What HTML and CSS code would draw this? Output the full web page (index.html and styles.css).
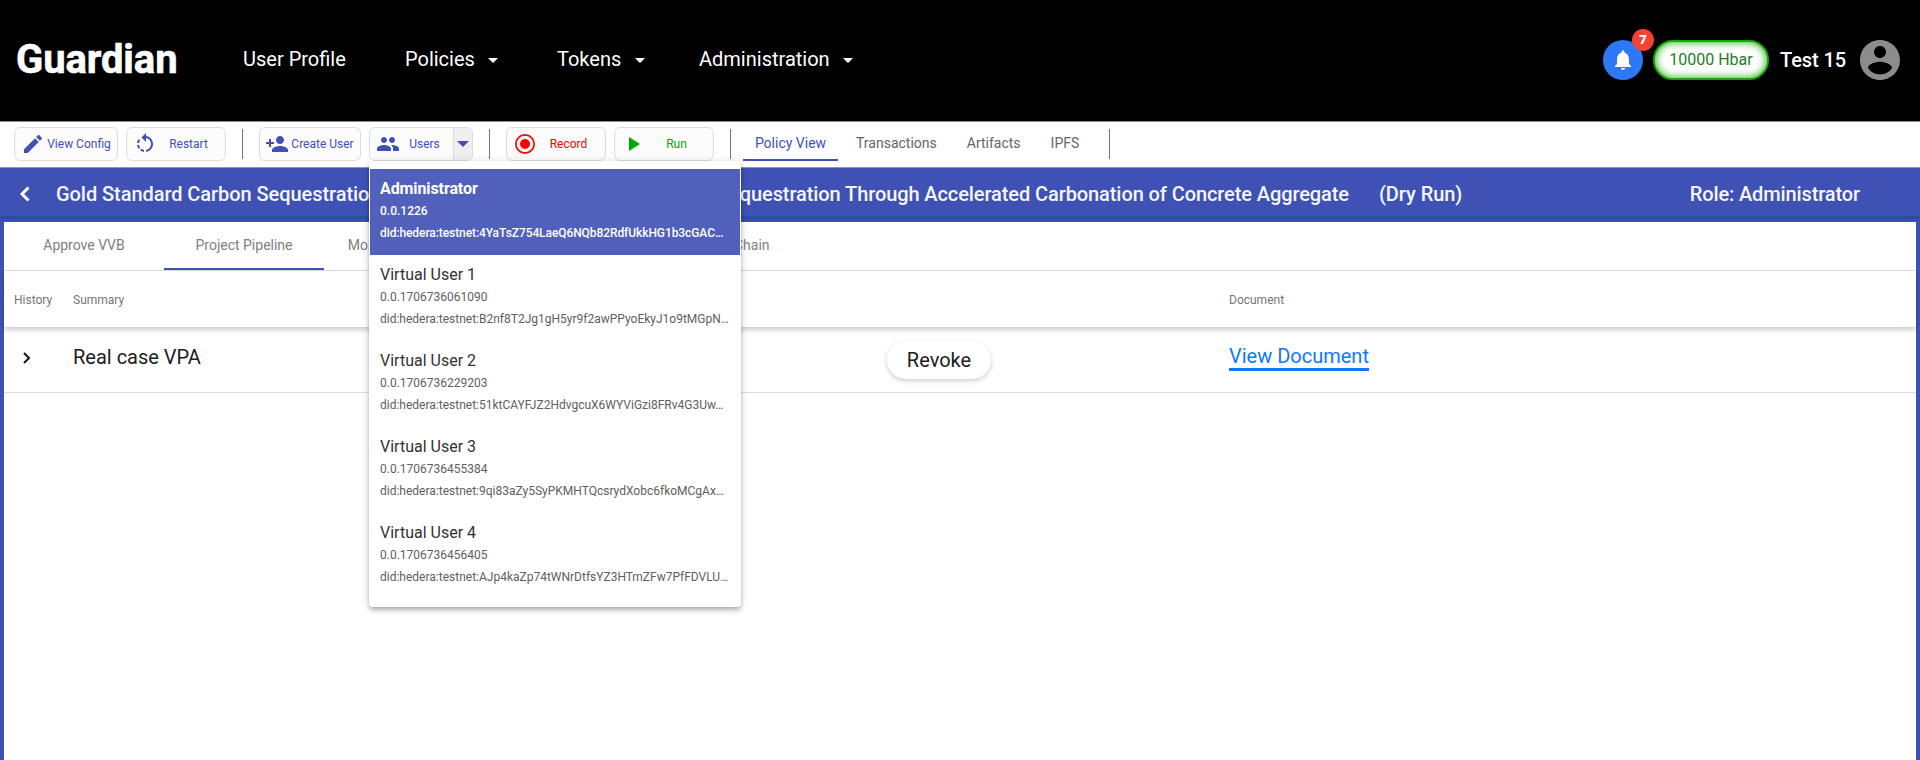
FILE: index.html
```html
<!DOCTYPE html>
<html lang="en">
<head>
<meta charset="utf-8">
<title>Guardian</title>
<link rel="stylesheet" href="styles.css">
</head>
<body>
<header class="topbar">
  <div class="brand">Guardian</div>
  <nav class="nav">
    <a class="nav-item profile">User Profile</a>
    <a class="nav-item policies">Policies<i class="caret"></i></a>
    <a class="nav-item tokens">Tokens<i class="caret"></i></a>
    <a class="nav-item admin">Administration<i class="caret"></i></a>
  </nav>
  <div class="bell">
    <svg width="24" height="24" viewBox="0 0 24 24"><path d="M12 22c1.100 0 2-.900 2-2h-4c0 1.100.890 2 2 2zm6-6v-5c0-3.070-1.640-5.640-4.500-6.320V4c0-.830-.670-1.500-1.500-1.500s-1.500.670-1.500 1.500v.680C7.630 5.360 6 7.920 6 11v5l-2 2v1h16v-1l-2-2z"/></svg>
    <span class="badge">7</span>
  </div>
  <div class="balance">10000 Hbar</div>
  <div class="username">Test 15</div>
  <svg class="avatar" viewBox="2 2 20 20"><path d="M12 2C6.480 2 2 6.480 2 12s4.480 10 10 10 10-4.480 10-10S17.520 2 12 2zm0 3c1.660 0 3 1.340 3 3s-1.340 3-3 3-3-1.340-3-3 1.340-3 3-3zm0 14.200c-2.500 0-4.710-1.280-6-3.220.030-1.990 4-3.080 6-3.080 1.990 0 5.970 1.090 6 3.080-1.290 1.940-3.500 3.220-6 3.220z"/></svg>
</header>

<div class="toolbar">
  <button class="btn config"><svg viewBox="0 0 24 24"><path d="M3 17.250V21h3.750L17.810 9.940l-3.750-3.750L3 17.250zM20.710 7.040c.390-.390.390-1.020 0-1.410l-2.340-2.340c-.390-.390-1.020-.390-1.410 0l-1.830 1.830 3.750 3.750 1.830-1.830z"/></svg><span>View Config</span></button>
  <button class="btn restart"><svg viewBox="0 0 24 24"><path d="M7.110 8.530L5.700 7.110C4.800 8.270 4.240 9.610 4.070 11h2.020c.140-.880.490-1.720 1.020-2.470zM6.090 13H4.070c.170 1.390.720 2.730 1.620 3.890l1.410-1.420c-.520-.750-.870-1.590-1.010-2.470zm1.010 5.320c1.160.900 2.510 1.440 3.900 1.610V17.900c-.870-.150-1.710-.490-2.460-1.030L7.100 18.320zM13 4.070V1L8.450 5.550 13 10V6.090c2.840.480 5 2.940 5 5.910s-2.160 5.430-5 5.910v2.020c3.950-.490 7-3.850 7-7.930s-3.050-7.440-7-7.930z"/></svg><span>Restart</span></button>
  <i class="divider"></i>
  <button class="btn create"><svg viewBox="0 0 24 24"><path d="M15 12c2.210 0 4-1.790 4-4s-1.790-4-4-4-4 1.790-4 4 1.790 4 4 4zm-9-2V7H4v3H1v2h3v3h2v-3h3v-2H6zm9 4c-2.670 0-8 1.340-8 4v2h16v-2c0-2.660-5.330-4-8-4z"/></svg><span>Create User</span></button>
  <div class="users">
    <button class="btn users-btn"><svg viewBox="0 0 24 24"><path d="M16 11c1.660 0 2.990-1.340 2.990-3S17.660 5 16 5s-3 1.340-3 3 1.340 3 3 3zm-8 0c1.660 0 2.990-1.340 2.990-3S9.660 5 8 5 5 6.340 5 8s1.340 3 3 3zm0 2c-2.330 0-7 1.170-7 3.500V19h14v-2.500c0-2.330-4.670-3.500-7-3.500zm8 0c-.290 0-.620.020-.970.050 1.160.840 1.970 1.970 1.970 3.450V19h6v-2.500c0-2.330-4.670-3.500-7-3.500z"/></svg><span>Users</span><b class="split"><i class="caret"></i></b></button>
    <div class="menu">
      <div class="user active"><h4>Administrator</h4><p>0.0.1226</p><p class="did">did:hedera:testnet:4YaTsZ754LaeQ6NQb82RdfUkkHG1b3cGAC…</p></div>
      <div class="user"><h4>Virtual User 1</h4><p>0.0.1706736061090</p><p>did:hedera:testnet:B2nf8T2Jg1gH5yr9f2awPPyoEkyJ1o9tMGpN…</p></div>
      <div class="user"><h4>Virtual User 2</h4><p>0.0.1706736229203</p><p>did:hedera:testnet:51ktCAYFJZ2HdvgcuX6WYViGzi8FRv4G3Uw…</p></div>
      <div class="user"><h4>Virtual User 3</h4><p>0.0.1706736455384</p><p>did:hedera:testnet:9qi83aZy5SyPKMHTQcsrydXobc6fkoMCgAx…</p></div>
      <div class="user"><h4>Virtual User 4</h4><p>0.0.1706736456405</p><p>did:hedera:testnet:AJp4kaZp74tWNrDtfsYZ3HTmZFw7PfFDVLU…</p></div>
    </div>
  </div>
  <i class="divider"></i>
  <button class="btn record"><svg viewBox="0 0 24 24"><path fill-rule="evenodd" d="M12 2a10 10 0 1 0 0 20a10 10 0 0 0 0-20zm0 1.700a8.300 8.300 0 1 1 0 16.600a8.300 8.300 0 0 1 0-16.600zM12 7a5 5 0 1 0 0 10a5 5 0 0 0 0-10z"/></svg><span>Record</span></button>
  <button class="btn run"><svg viewBox="0 0 24 24"><path d="M8 5v14l11-7z"/></svg><span>Run</span></button>
  <i class="divider"></i>
  <nav class="views"><a class="on">Policy View</a><a>Transactions</a><a>Artifacts</a><a>IPFS</a></nav>
  <i class="divider"></i>
</div>

<div class="policy-head">
  <svg class="back" viewBox="0 0 10 16"><path d="M8.500 1.500L2 8l6.500 6.500"/></svg>
  <h1 class="title"><span>Gold Standard Carbon Sequestration</span><span class="title-end">Sequestration Through Accelerated Carbonation of Concrete Aggregate</span></h1>
  <span class="mode">(Dry Run)</span>
  <span class="role">Role: Administrator</span>
</div>

<main class="content">
  <nav class="tabs"><a>Approve VVB</a><a class="on">Project Pipeline</a><a>Monitoring Report</a><a class="last">Trust Chain</a></nav>
  <div class="grid thead"><span>History</span><span>Summary</span><span></span><span>Document</span></div>
  <div class="grid row">
    <svg class="expand" viewBox="0 0 8 12"><path d="M1 1l5 5-5 5"/></svg>
    <span class="summary">Real case VPA</span>
    <span><button class="revoke">Revoke</button></span>
    <span><a class="doc">View Document</a></span>
  </div>
</main>
</body>
</html>
```
FILE: styles.css
```css
* { box-sizing: border-box; }
body { margin: 0; height: 760px; overflow: hidden; display: flex; flex-direction: column; font-family: Roboto, sans-serif; background: #fff; }
button { font-family: inherit; }

.topbar { height: 122px; flex: none; display: flex; align-items: center; background: #000; border-bottom: 1px solid #8c8c8c; padding: 0 20px 1px 16px; color: #fff; }
.brand { width: 227px; font-size: 40px; font-weight: 700; line-height: 46px; letter-spacing: -0.1px; -webkit-text-stroke: 0.6px #fff; }
.nav { flex: 1; display: flex; font-size: 20px; line-height: 24px; padding-bottom: 2px; }
.nav-item { display: flex; align-items: center; gap: 13px; }
.profile { width: 162px; }
.policies { width: 152px; }
.tokens { width: 142px; }
.tokens .caret { margin-left: 1px; }
.caret { border: 5px solid transparent; border-top-color: currentColor; border-bottom: 0; }
.nav .caret { margin-top: 3px; }
.bell { position: relative; width: 40px; height: 40px; border-radius: 50%; background: #2c78f6; display: flex; align-items: center; justify-content: center; }
.bell svg { width: 24px; height: 24px; fill: #fff; }
.badge { position: absolute; left: 29px; top: -11px; width: 22px; height: 22px; border-radius: 50%; background: #f44336; font-size: 13px; font-weight: 900; line-height: 22px; text-align: center; }
.balance { margin-left: 10px; width: 116px; height: 40px; border: 2px solid #12a800; border-radius: 20px; background: #fff; color: #1d801d; box-shadow: inset 0 0 8px 0 #12a800; font-size: 16px; line-height: 35px; text-align: center; }
.username { margin-left: 11px; width: 80px; font-size: 20px; font-weight: 500; letter-spacing: -0.1px; }
.avatar { width: 40px; height: 40px; fill: #8c8c8c; }

.toolbar { height: 46px; flex: none; display: flex; padding: 5px 14px 0; border-bottom: 1px solid #9295ad; }
.btn { width: 100px; height: 34px; padding: 0 0 0 8px; margin: 0 8px 0 0; border: 1px solid #dcdcdc; border-radius: 6px; background: #fcfcfc; color: #3f51b5; font-size: 12px; display: flex; align-items: center; }
.btn svg { width: 24px; height: 24px; flex: none; fill: currentColor; }
.btn span { flex: 1; text-align: center; white-space: nowrap; }
.config { width: 104px; padding-right: 4px; }
.config svg { margin-left: -2px; }
.restart { padding-left: 6px; }
.restart span { padding-right: 5px; }
.create { width: 102px; padding: 0 4px 0 5px; }
.users { position: relative; margin-right: 8px; }
.users-btn { width: 104px; margin: 0; padding-left: 6px; overflow: hidden; }
.users-btn span { padding-right: 4px; }
.split { width: 19px; height: 32px; border-left: 1px solid #dcdcdc; background: #efefef; display: flex; align-items: center; justify-content: center; }
.split .caret { border-width: 6px 6px 0; margin-right: 1px; }
.record { color: #f00; }
.record svg { margin-left: -2px; }
.record span { padding-right: 5px; }
.run { padding-left: 6px; color: #0a0; }
.run span { padding-right: 5px; }
.divider { width: 1px; height: 30px; margin: 2px 16px 0 8px; background: #757575; }
.views { display: flex; margin-left: -4px; font-size: 14px; line-height: 32px; color: #666; }
.views a { height: 34px; padding: 0 18px 0 0; }
.views a + a { margin-right: 12px; }
.views .on { width: 95px; padding: 0; text-align: center; margin-right: 18px; color: #3f51b5; border-bottom: 2px solid #3f51b5; }
.views a:last-child { margin-right: 4px; }

.menu { position: absolute; z-index: 5; left: 0; top: 34px; width: 372px; height: 446px; padding: 8px 1px; background: #fff; border-radius: 4px; box-shadow: 0 2px 4px -1px rgba(0,0,0,.2), 0 4px 5px rgba(0,0,0,.14), 0 1px 10px rgba(0,0,0,.12); }
.user { height: 86px; padding: 8px 0 0 10px; color: #606060; white-space: nowrap; overflow: hidden; }
.user h4 { margin: 0; font-size: 16px; font-weight: 400; line-height: 23px; color: #333; }
.user p { margin: 0; font-size: 12px; line-height: 22px; }
.active, .active h4 { color: #fff; font-weight: 500; }
.active h4 { font-weight: 700; letter-spacing: -0.1px; }
.active .did { letter-spacing: -0.08px; }
.active { background: #5161bb; }

.policy-head { height: 54px; flex: none; display: flex; padding: 13px 60px 0 20px; background: linear-gradient(#3f51b5 48px, #1c5a9c 48px, #1c5a9c 49px, #3545a0 49px, #3f51b5 54px); color: #f5f6fb; font-size: 20px; font-weight: 500; line-height: 27px; letter-spacing: -0.06px; }
.back { width: 10px; height: 16px; margin: 5px 26px 0 0; fill: none; stroke: #fff; stroke-width: 3; }
.title { width: 1293px; margin: 0; display: flex; justify-content: space-between; font: inherit; white-space: nowrap; }
.title-end { letter-spacing: -0.09px; }
.mode { margin-left: 30px; flex: 1; }
.role { letter-spacing: -0.12px; }

.content { flex: 1; border: solid #3f51b5; border-width: 0 4px; }
.tabs { height: 49px; display: flex; border-bottom: 1px solid #dcdcdc; color: #808080; font-size: 14px; line-height: 47px; }
.tabs a { width: 160px; height: 48px; text-align: center; }
.tabs .on { border-bottom: 2px solid #3f51b5; }
.tabs .last { margin-left: 170px; }
.grid { display: grid; grid-template-columns: 59px 814px 342px 1fr; padding-left: 10px; }
.thead { height: 56px; font-size: 12px; line-height: 59px; color: #757575; box-shadow: 0 3px 5px rgba(0,0,0,.2); position: relative; }
.row { height: 66px; border-bottom: 1px solid #dcdcdc; font-size: 20px; color: #202020; }
.expand { width: 8px; height: 12px; margin: 25px 0 0 9px; fill: none; stroke: #111; stroke-width: 2; }
.summary { line-height: 61px; }
.revoke { margin: 14px 0 0; width: 104px; height: 38px; border: 0; border-radius: 19px; background: #fff; color: #202020; font-size: 20px; box-shadow: 0 2px 5px rgba(0,0,0,.2); }
.doc { display: inline-block; margin-top: 17px; line-height: 24px; border-bottom: 3px solid #0f77ff; color: #0f77ff; }
```
